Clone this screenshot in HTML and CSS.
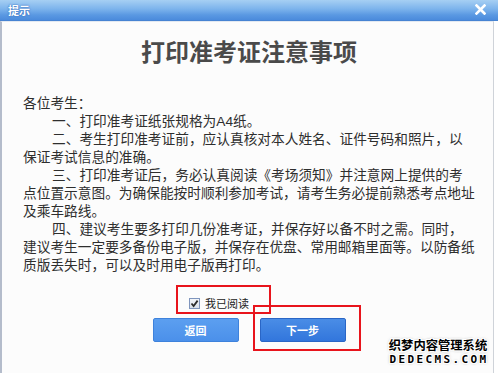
FILE: index.html
```html
<!DOCTYPE html>
<html lang="zh-CN">
<head>
<meta charset="utf-8">
<title>提示</title>
<link rel="stylesheet" href="styles.css">
</head>
<body>
<div class="dialog">
  <div class="titlebar">
    <span class="title">提示</span>
    <svg class="close" width="11" height="11" viewBox="0 0 11 11"><path d="M1.5 1.5 L9.5 9.5 M9.5 1.5 L1.5 9.5" stroke="#fff" stroke-width="2.6" stroke-linecap="square"/></svg>
  </div>
  <div class="panel">
    <h1 class="heading">打印准考证注意事项</h1>
    <div class="notice">
      <p class="line">各位考生：</p>
      <p class="para">一、打印准考证纸张规格为A4纸。</p>
      <p class="para">二、考生打印准考证前，应认真核对本人姓名、证件号码和照片，以<br>保证考试信息的准确。</p>
      <p class="para">三、打印准考证后，务必认真阅读《考场须知》并注意网上提供的考<br>点位置示意图。为确保能按时顺利参加考试，请考生务必提前熟悉考点地址<br>及乘车路线。</p>
      <p class="para">四、建议考生要多打印几份准考证，并保存好以备不时之需。同时，<br>建议考生一定要多备份电子版，并保存在优盘、常用邮箱里面等。以防备纸<br>质版丢失时，可以及时用电子版再打印。</p>
    </div>
    <div class="agree">
      <span class="checkbox"><svg width="9" height="9" viewBox="0 0 9 9"><path d="M1.5 4.5 L3.6 7 L7.6 1.6" fill="none" stroke="#2b2b2b" stroke-width="1.8"/></svg></span>
      <span class="agree-text">我已阅读</span>
    </div>
    <div class="buttons">
      <button class="btn">返回</button>
      <button class="btn btn-primary">下一步</button>
    </div>
  </div>
  <div class="mark mark-agree"></div>
  <div class="mark mark-next"></div>
  <div class="watermark">
    <div class="wm-cn">织梦内容管理系统</div>
    <div class="wm-en">DEDECMS.COM</div>
  </div>
</div>
</body>
</html>
```

FILE: styles.css
```css
html, body {
  margin: 0;
  padding: 0;
}
body {
  width: 498px;
  height: 373px;
  overflow: hidden;
  background: #fff;
  font-family: "Noto Sans CJK SC", sans-serif;
}
.dialog {
  position: relative;
  width: 498px;
  height: 373px;
  display: flex;
  flex-direction: column;
  background: #fff;
}
.titlebar {
  height: 20px;
  flex: none;
  background: linear-gradient(#a6cff3 0%, #7cb3ec 45%, #5a98e2 75%, #4b8bdc 100%);
  border-bottom: 1px solid #4683d2;
  display: flex;
  align-items: center;
  justify-content: space-between;
  padding: 0 12px 0 8px;
}
.title {
  color: #fff;
  font-size: 11px;
  font-weight: bold;
  line-height: 20px;
  text-shadow: 0 0 2px #3a70c0, 0 0 1px #3a70c0;
}
.close {
  display: block;
  margin-top: -2px;
}
.panel {
  flex: 1;
  margin-right: 4px;
  border-left: 2px solid #b4bccb;
  border-right: 1px solid #cfd3d9;
  border-top: 1px solid #e3e9f1;
  background: #fcfcfc;
  padding-left: 3px;
  color: #2e2e2e;
}
.heading {
  margin: 14px 0 28px;
  font-size: 24px;
  line-height: 30px;
  font-weight: bold;
  color: #4a4a4a;
  text-align: center;
}
.notice {
  margin-left: 18px;
  padding-top: 1px;
  font-family: "Liberation Sans", "Noto Sans CJK SC", sans-serif;
  font-size: 13.7px;
  line-height: 18px;
  white-space: nowrap;
}
.line, .para {
  margin: 0;
}
.para {
  text-indent: 29px;
}
.agree {
  display: flex;
  align-items: center;
  height: 20px;
  margin: 18px 0 0 184px;
}
.checkbox {
  width: 9px;
  height: 9px;
  border: 1px solid #7f95bd;
  background: linear-gradient(#f3f5f9, #d9e0ea);
  display: flex;
  align-items: center;
  justify-content: center;
}
.checkbox svg {
  display: block;
}
.agree-text {
  margin-left: 5px;
  font-size: 11px;
  color: #222;
  line-height: 20px;
}
.buttons {
  display: flex;
  justify-content: center;
  gap: 21px;
  margin-top: 5px;
}
.btn {
  width: 86px;
  height: 24px;
  border: 1px solid #3e82dc;
  border-radius: 2px;
  background: linear-gradient(#5c9ff0, #4b90ea);
  color: #fff;
  font-family: "Noto Sans CJK SC", sans-serif;
  font-size: 11px;
  font-weight: bold;
  padding: 0;
  line-height: 22px;
}
.btn-primary {
  border-color: #2a66c6;
  background: linear-gradient(#4a8de6, #3276dc);
}
.mark {
  position: absolute;
  border: 2px solid #e8141c;
  box-sizing: border-box;
}
.mark-agree {
  left: 176px;
  top: 285px;
  width: 95px;
  height: 29px;
}
.mark-next {
  left: 253px;
  top: 305px;
  width: 108px;
  height: 46px;
}
.watermark {
  position: absolute;
  left: 387px;
  top: 337px;
  width: 102px;
  text-align: center;
  color: #000;
  text-shadow: 1px 0 #fff, -1px 0 #fff, 0 1px #fff, 0 -1px #fff, 1px 1px #fff, -1px -1px #fff, 1px -1px #fff, -1px 1px #fff, 0 0 3px #777;
}
.wm-cn {
  font-size: 12.3px;
  line-height: 16px;
  font-weight: bold;
}
.wm-en {
  font-family: "DejaVu Sans Mono", monospace;
  font-size: 11px;
  line-height: 11px;
  font-weight: bold;
  letter-spacing: 2.4px;
  margin-top: 1px;
  margin-right: -2px;
}
```
